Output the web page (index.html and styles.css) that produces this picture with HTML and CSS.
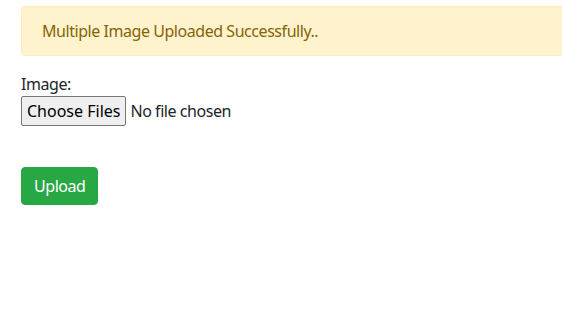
FILE: index.html
```html
<!DOCTYPE html>
<html lang="en">
<head>
<meta charset="utf-8">
<title>Upload</title>
<link rel="stylesheet" href="styles.css">
</head>
<body>
<div class="page">
  <div class="alert">Multiple Image Uploaded Successfully..</div>
  <form class="form">
    <label class="label" for="images">Image:</label>
    <input class="file" id="images" type="file" multiple>
    <button class="btn" type="button">Upload</button>
  </form>
</div>
</body>
</html>
```
FILE: styles.css
```css
html, body {
  margin: 0;
  padding: 0;
  background: #fff;
}
body {
  font-family: "Noto Sans", "Open Sans", sans-serif;
  font-size: 16px;
  line-height: 1.5;
  color: #212529;
  overflow: hidden;
}
.page {
  padding: 6px 0 0 21px;
  width: 541px;
}
.alert {
  background: #fff3cd;
  border: 1px solid #ffeeba;
  border-right: 0;
  color: #856404;
  border-radius: 4px 0 0 4px;
  padding: 12px 20px;
  margin-bottom: 16px;
  letter-spacing: -0.45px;
}
.form {
  display: flex;
  flex-direction: column;
  align-items: flex-start;
}
.label {
  line-height: 24px;
  letter-spacing: -0.45px;
}
.file {
  font: inherit;
  font-size: 16px;
  color: #212529;
  letter-spacing: -0.45px;
  line-height: 22px;
}
.file::file-selector-button {
  font: inherit;
  background: #efefef;
  border: 1px solid #767676;
  border-radius: 2px;
  padding: 3px 5px;
  margin-right: 4px;
  color: #000;
}
.btn {
  margin-top: 41px;
  font: inherit;
  letter-spacing: -0.45px;
  background: #28a745;
  border: 1px solid #28a745;
  color: #fff;
  border-radius: 4px;
  padding: 6px 12px;
  line-height: 24px;
}
```
